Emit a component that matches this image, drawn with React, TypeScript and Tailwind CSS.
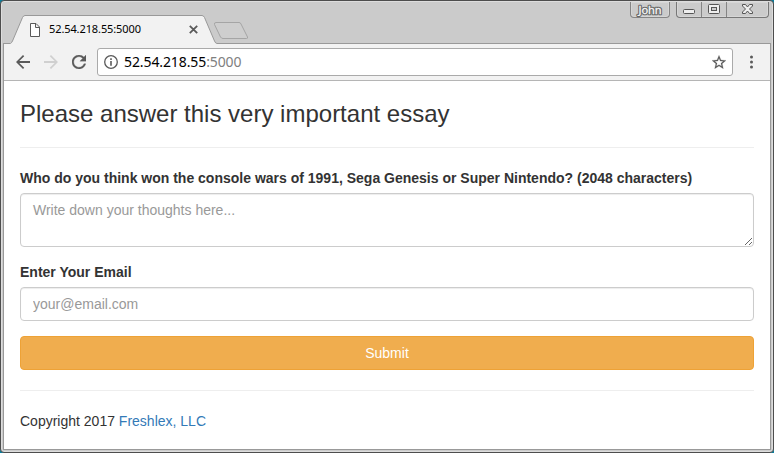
import React from "react";

function WindowControls() {
  return (
    <div className="flex h-[18px] justify-end gap-[6px] pr-[2px]">
      <div className="flex h-[16px] w-[40px] items-center justify-center rounded-b-[4px] border border-t-0 border-[#858585] bg-[#cbcbcb] shadow-[inset_0_0_0_1px_#d6d6d6]">
        <svg width="38" height="16" viewBox="0 0 38 16">
          <text x="19" y="12" textAnchor="middle" fontSize="11" fontFamily="'Noto Sans', sans-serif" textLength="23" fill="none" stroke="#666666" strokeWidth="2.6" strokeLinejoin="round">John</text>
          <text x="19" y="12" textAnchor="middle" fontSize="11" fontFamily="'Noto Sans', sans-serif" textLength="23" fill="#ffffff" stroke="#f0f0f0" strokeWidth="0.3">John</text>
        </svg>
      </div>
      <div className="flex h-[16px] w-[93px] rounded-b-[4px] border border-t-0 border-[#777777] bg-[#cbcbcb] shadow-[inset_0_0_0_1px_#d6d6d6]">
        <div className="flex w-[25px] border-r border-[#858585]">
          <svg width="24" height="15" viewBox="0 0 24 15"><rect x="6.5" y="7.500" width="11" height="4" rx="1" fill="#eee" stroke="#555" /></svg>
        </div>
        <div className="flex w-[25px] border-r border-[#858585]">
          <svg width="24" height="15" viewBox="0 0 24 15" fill="#eee" stroke="#555"><rect x="6.5" y="2.500" width="11" height="9" rx="1" /><rect x="9.5" y="5.500" width="5" height="3" fill="#ccc" /></svg>
        </div>
        <div className="flex w-[41px]">
          <svg width="41" height="15" viewBox="0 1 41 15"><path d="M15.500 3.500h3l2 2.500 2-2.500h3v1.500l-3 3 3 3v1.500h-3l-2-2.500-2 2.500h-3V11l3-3-3-3z" fill="#eee" stroke="#555" /></svg>
        </div>
      </div>
    </div>
  );
}

function TabStrip() {
  return (
    <div className="relative h-[41px]">
      <WindowControls />
      <svg className="absolute left-0 top-0" width="768" height="42" viewBox="3 2 768 42" fill="none">
        <path d="M4 43.500H10.500Q11.500 43 12.500 41L22.500 17.500Q23.500 15.500 25 15.500H202Q203.500 15.500 204.500 17.500L214.500 41Q215.500 43.500 217 43.500H771V45H4z" fill="#f2f2f2" />
        <path d="M4 43.500H10.500Q11.500 43 12.500 41L22.500 17.500Q23.500 15.500 25 15.500H202Q203.500 15.500 204.500 17.500L214.500 41Q215.500 43.500 217 43.500H771" stroke="#999999" />
        <path d="M216 22.500H239Q240.500 22.500 241 24L247.500 37Q248 38.500 246.500 38.500H223Q221.500 38.500 220.500 37L214.500 24.500Q214 22.500 216 22.500z" fill="#cecece" stroke="#a5a5a5" />
      </svg>
      <div className="absolute left-[27px] top-[14px] flex h-[27px] w-[172px] items-center">
        <svg width="10" height="14" viewBox="0 0 10 14" fill="#fff" stroke="#5a5a5a"><path d="M.5.500H6L9.500 4v9.500H.5zM5.500.500V4.500H9.500" /></svg>
        <span className="-mt-0.5 ml-[9px] whitespace-nowrap font-['Noto_Sans',sans-serif] text-[11px] leading-4 tracking-[-0.1px] text-black">52.54.218.55:5000</span>
        <svg className="ml-auto mr-[4px]" width="9" height="9" viewBox="0 0 9 9" stroke="#5a5a5a" strokeWidth="1.800"><path d="M.8.800L8.200 8.200M8.200.800L.8 8.200" /></svg>
      </div>
    </div>
  );
}

function Toolbar() {
  return (
    <div className="flex h-[38px] items-center border-b border-[#b5b5b5] bg-[#f2f2f2] pl-[12px]">
      <div className="flex items-center gap-[14px]">
        <svg width="14" height="14" viewBox="4 4 16 16" fill="#5a5a5a"><path d="M20 10.900H7.830l5.590-5.490L12 4l-8 8 8 8 1.410-1.410L7.830 13.100H20z" /></svg>
        <svg width="14" height="14" viewBox="4 4 16 16" fill="#d0d0d0"><path d="M4 10.900H16.170L10.580 5.410 12 4l8 8-8 8-1.410-1.410L16.170 13.100H4z" /></svg>
        <svg width="14" height="14" viewBox="4 4 16 16" fill="#5a5a5a" stroke="#5a5a5a" strokeWidth="0.3"><path d="M17.650 6.350C16.200 4.900 14.210 4 12 4c-4.420 0-7.990 3.580-7.990 8s3.570 8 7.990 8c3.730 0 6.840-2.550 7.730-6h-2.080c-.82 2.330-3.040 4-5.650 4-3.310 0-6-2.690-6-6s2.690-6 6-6c1.660 0 3.140.69 4.220 1.780L13 11h7V4l-2.350 2.350z" /></svg>
      </div>
      <div className="ml-[11px] flex h-[28px] w-[636px] items-center rounded-[3px] border border-[#aaaaaa] bg-white px-[6px]">
        <svg width="14" height="14" viewBox="0 0 14 14" fill="none" stroke="#5a5a5a"><circle cx="7" cy="7" r="6.300" strokeWidth="1.300" /><path d="M7 3.300V5M7 6v4.700" strokeWidth="1.600" /></svg>
        <span className="ml-[6px] whitespace-nowrap font-['Noto_Sans',sans-serif] text-[14px] leading-5 tracking-[-0.1px] text-black">52.54.218.55<span className="text-[#808080]">:5000</span></span>
        <svg className="ml-auto" width="14" height="14" viewBox="2 2 20 19" fill="#5a5a5a" stroke="#5a5a5a" strokeWidth="0.3"><path d="M22 9.240l-7.190-.62L12 2 9.190 8.630 2 9.240l5.460 4.730L5.820 21 12 17.270 18.180 21l-1.630-7.030L22 9.240zM12 15.400l-3.760 2.270 1-4.280-3.320-2.880 4.380-.38L12 6.100l1.710 4.040 4.380.38-3.320 2.880 1 4.280L12 15.400z" /></svg>
      </div>
      <svg className="ml-[16px]" width="4" height="14" viewBox="0 0 4 14" fill="#5a5a5a"><circle cx="2.500" cy="2" r="1.500" /><circle cx="2.500" cy="7" r="1.500" /><circle cx="2.500" cy="12" r="1.500" /></svg>
    </div>
  );
}

const fieldStyle =
  "block w-full rounded-[4px] border border-[#cccccc] bg-white px-3 py-[6px] text-[14px] leading-5 text-[#555555] shadow-[inset_0_1px_1px_rgba(0,0,0,0.075)] outline-none placeholder:text-[#999999]";

function EssayForm() {
  return (
    <main className="flex-1 bg-white px-4 font-['Liberation_Sans',Arial,sans-serif] text-[14px] leading-5 text-[#333333]">
      <h3 className="pt-5 text-[24px] leading-[26.4px]">Please answer this very important essay</h3>
      <hr className="my-5 border-[#eeeeee]" />
      <form onSubmit={(event) => event.preventDefault()}>
        <label htmlFor="essay" className="mb-[5px] block font-bold">Who do you think won the console wars of 1991, Sega Genesis or Super Nintendo? (2048 characters)</label>
        <textarea id="essay" className={`${fieldStyle} mb-[15px] h-[54px] resize-y`} placeholder="Write down your thoughts here..." />
        <label htmlFor="email" className="mb-[5px] block font-bold">Enter Your Email</label>
        <input id="email" type="email" className={`${fieldStyle} mb-[15px] h-[34px]`} placeholder="your@email.com" />
        <button className="block h-[34px] w-full rounded-[4px] border border-[#eea236] bg-[#f0ad4e] text-white">Submit</button>
      </form>
      <hr className="my-5 border-[#eeeeee]" />
      <footer>Copyright 2017 <a href="#" className="text-[#337ab7]">Freshlex, LLC</a></footer>
    </main>
  );
}

export default function App() {
  return (
    <div className="h-[453px] w-[774px] overflow-hidden bg-[#087f9f]">
      <div className="flex h-[453px] w-[774px] flex-col rounded-[4px] border border-[#4d4d4d] bg-[#cbcbcb] p-px pb-[2px] shadow-[inset_0_0_0_1px_#dddddd]">
        <div className="flex min-h-0 flex-1 flex-col px-px">
          <TabStrip />
          <div className="flex min-h-0 flex-1 flex-col border-x border-b border-[#999999]">
            <Toolbar />
            <EssayForm />
          </div>
        </div>
      </div>
    </div>
  );
}
